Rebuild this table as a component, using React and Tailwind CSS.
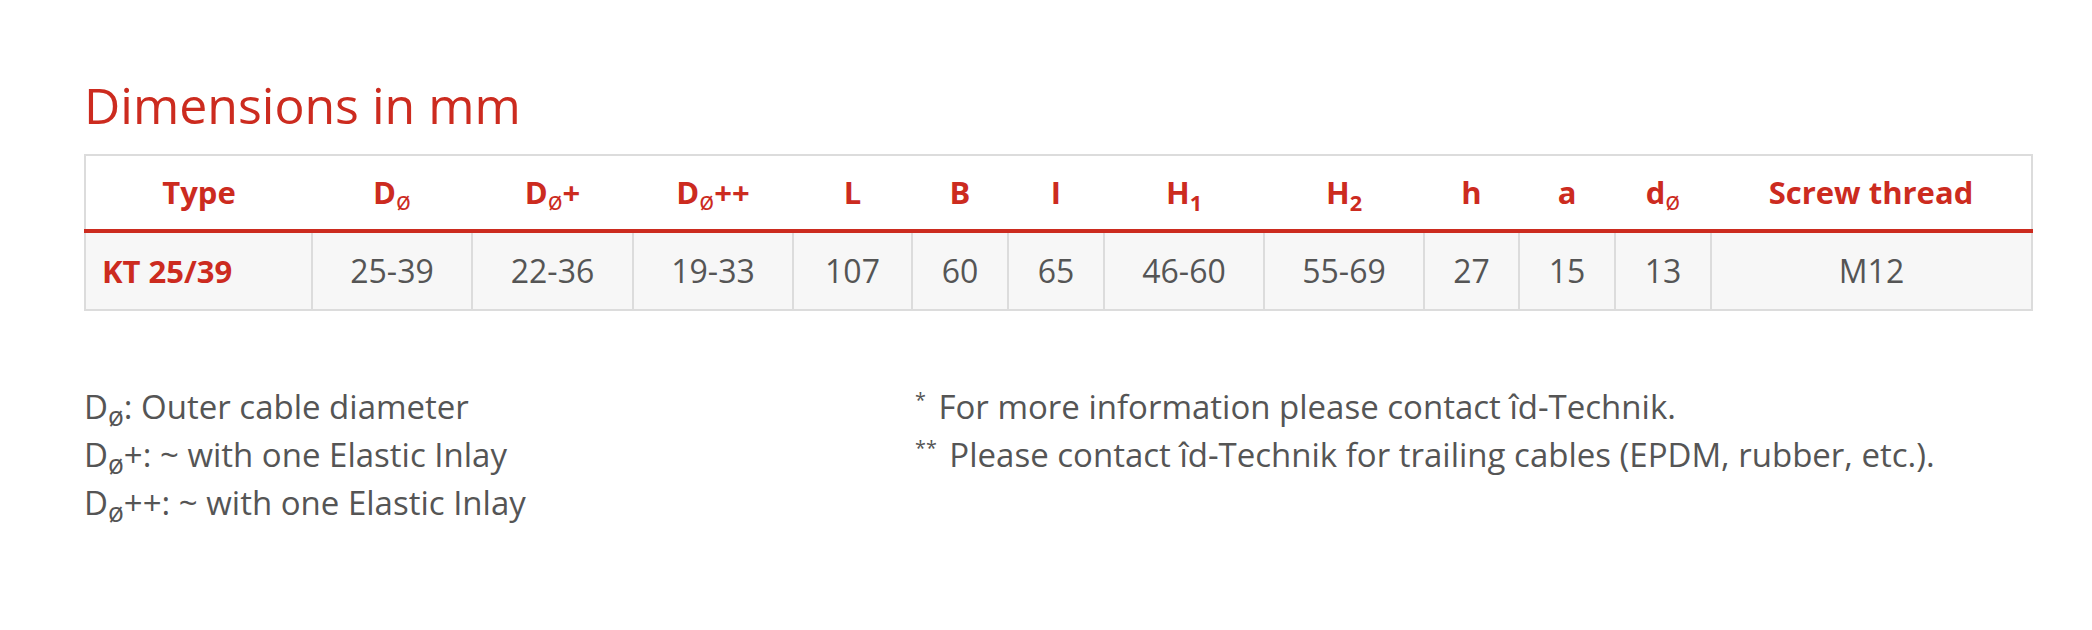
import React from "react";

const red = "text-[#cc2b1f]";

const Sub = ({ children }) => (
  <sub className="text-[0.8em] font-normal bottom-[-0.25em]">{children}</sub>
);

const columns = [
  { key: "type", label: "Type", w: "w-[227px]" },
  { key: "d", label: <>D<Sub>ø</Sub></>, w: "w-[160px]" },
  { key: "dp", label: <>D<Sub>ø</Sub>+</>, w: "w-[161px]" },
  { key: "dpp", label: <>D<Sub>ø</Sub>++</>, w: "w-[160px]" },
  { key: "L", label: "L", w: "w-[119px]" },
  { key: "B", label: "B", w: "w-[96px]" },
  { key: "I", label: "I", w: "w-[96px]" },
  { key: "H1", label: <>H<sub className="text-[0.7em] bottom-[-0.3em]">1</sub></>, w: "w-[160px]" },
  { key: "H2", label: <>H<sub className="text-[0.7em] bottom-[-0.3em]">2</sub></>, w: "w-[160px]" },
  { key: "h", label: "h", w: "w-[95px]" },
  { key: "a", label: "a", w: "w-[96px]" },
  { key: "dd", label: <>d<Sub>ø</Sub></>, w: "w-[96px]" },
  { key: "thread", label: "Screw thread", w: "" },
];

const row = ["KT 25/39", "25-39", "22-36", "19-33", "107", "60", "65", "46-60", "55-69", "27", "15", "13", "M12"];

export default function App() {
  return (
    <div className="min-h-screen w-full bg-white pl-[84px] pr-[59px] pt-[80px] font-['Open_Sans',sans-serif]">
      <h2 className={`text-[50px] leading-none font-normal ${red} mb-[24px]`}>
        Dimensions in mm
      </h2>

      <table className="w-full table-fixed border-collapse border-2 border-[#dcdcdc]">
        <thead>
          <tr className="h-[76px] border-b-4 border-[#cc2b1f]">
            {columns.map((c) => (
              <th
                key={c.key}
                className={`${c.w} text-center align-middle text-[31px] font-bold ${red} p-0`}
              >
                {c.label}
              </th>
            ))}
          </tr>
        </thead>
        <tbody>
          <tr className="h-[79px] bg-[#f7f7f7]">
            {row.map((v, i) => (
              <td
                key={i}
                className={
                  i === 0
                    ? `border-r-2 border-[#dcdcdc] pl-[16px] text-left text-[31px] font-bold ${red}`
                    : "border-r-2 border-[#dcdcdc] text-center text-[32px] text-[#555]"
                }
              >
                {v}
              </td>
            ))}
          </tr>
        </tbody>
      </table>

      <div className="mt-[72px] grid grid-cols-[831px_1fr] text-[33px] leading-[48px] text-[#555]">
        <div>
          <p>D<Sub>ø</Sub>: Outer cable diameter</p>
          <p>D<Sub>ø</Sub>+: ~ with one Elastic Inlay</p>
          <p>D<Sub>ø</Sub>++: ~ with one Elastic Inlay</p>
        </div>
        <div>
          <p><sup className="text-[0.6em] top-[-0.6em] mr-[4px]">*</sup> For more information please contact îd-Technik.</p>
          <p><sup className="text-[0.6em] top-[-0.6em] mr-[4px]">**</sup> Please contact îd-Technik for trailing cables (EPDM, rubber, etc.).</p>
        </div>
      </div>
    </div>
  );
}
